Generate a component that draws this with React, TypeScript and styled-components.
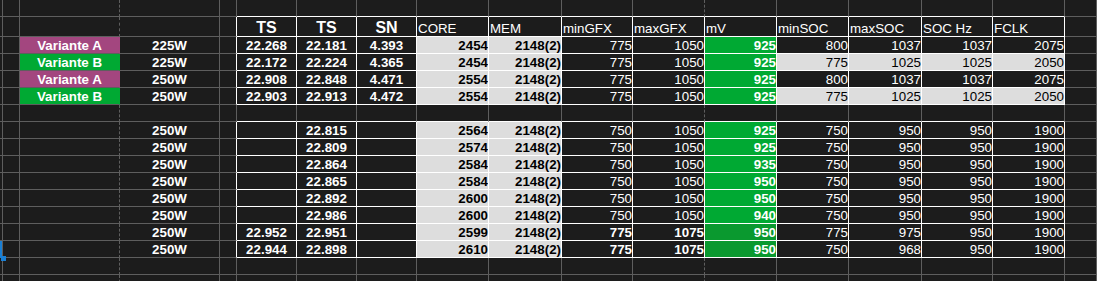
import React from 'react';
import styled, { createGlobalStyle } from 'styled-components';

const GlobalStyle = createGlobalStyle`
	html, body {
		margin: 0;
		padding: 0;
		background: #1c1c1c;
		overflow: hidden;
	}
`;

const GRID = '#5e5e5e';
const WHITE = '#ffffff';
const LIGHT = '#dddddd';
const PURPLE = '#a3467f';
const GREEN = '#00a933';
const DEEP_GREEN = '#0a992f';

const COLS = [3, 17, 100, 100, 17, 60, 60, 60, 72, 73, 71, 72, 72, 72, 73, 71, 72, 32];
const ROWS = [17, 20, 17, 17, 17, 17, 17, 17, 17, 17, 17, 17, 17, 17, 17, 17, 17];

type Align = 'l' | 'c' | 'r';

interface Spec {
	t?: string;
	bg?: string;
	fg?: string;
	b?: boolean;
	big?: boolean;
	a?: Align;
}

const Wrap = styled.div`
	position: relative;
	width: 1097px;
	height: 281px;
	overflow: hidden;
	background: #1c1c1c;
`;

const Sheet = styled.div`
	display: grid;
	grid-template-columns: ${COLS.map((c) => `${c}px`).join(' ')};
	grid-template-rows: ${ROWS.map((r) => `${r}px`).join(' ')};
	font-family: 'Liberation Sans', Arial, sans-serif;
`;

const Cell = styled.div<{
	$bg: string;
	$fg: string;
	$bold: boolean;
	$big: boolean;
	$align: Align;
	$right: string;
	$bottom: string;
	$dash: boolean;
}>`
	box-sizing: border-box;
	display: flex;
	align-items: flex-end;
	justify-content: ${(p) => (p.$align === 'l' ? 'flex-start' : p.$align === 'c' ? 'center' : 'flex-end')};
	padding-left: ${(p) => (p.$align === 'l' ? '1px' : '0')};
	background: ${(p) => p.$bg};
	color: ${(p) => p.$fg};
	border-right: 1px ${(p) => (p.$dash ? 'dashed' : 'solid')} ${(p) => p.$right};
	border-bottom: 1px solid ${(p) => p.$bottom};
	font-size: ${(p) => (p.$big ? '16px' : '13.33px')};
	line-height: ${(p) => (p.$big ? '17px' : '14px')};
	font-weight: ${(p) => (p.$bold ? 700 : 400)};
	white-space: nowrap;
	overflow: hidden;
`;

const CursorBar = styled.div`
	position: absolute;
	left: 0;
	top: 241px;
	width: 2px;
	height: 17px;
	background: #1a7fd4;
`;

const CursorHandle = styled.div`
	position: absolute;
	left: 1px;
	top: 256px;
	width: 5px;
	height: 5px;
	background: #1a7fd4;
`;

const empty = (n: number): Spec[] => Array.from({ length: n }, () => ({}));

const head = (t: string): Spec => ({ t, b: true, big: true, a: 'c' });
const label = (t: string): Spec => ({ t, a: 'l' });

interface RowData {
	variant?: [string, string];
	w: string;
	ts1?: string;
	ts2: string;
	sn?: string;
	core: string;
	gfx: [string, string];
	gfxBold?: boolean;
	mv: string;
	mvBg?: string;
	soc: [string, string, string, string];
	socLight?: boolean;
}

const dataRow = (d: RowData): Spec[] => [
	{},
	{},
	d.variant ? { t: d.variant[0], bg: d.variant[1], b: true, a: 'c' } : {},
	{ t: d.w, b: true, a: 'c' },
	{},
	{ t: d.ts1, b: true, a: 'c' },
	{ t: d.ts2, b: true, a: 'c' },
	{ t: d.sn, b: true, a: 'c' },
	{ t: d.core, bg: LIGHT, fg: '#000', b: true },
	{ t: '2148(2)', bg: LIGHT, fg: '#000', b: true },
	{ t: d.gfx[0], b: d.gfxBold },
	{ t: d.gfx[1], b: d.gfxBold },
	{ t: d.mv, bg: d.mvBg ?? GREEN, b: true },
	...d.soc.map((t) => (d.socLight ? { t, bg: LIGHT, fg: '#000' } : { t })),
	{},
];

const A: [string, string] = ['Variante A', PURPLE];
const B: [string, string] = ['Variante B', GREEN];
const SOC_A: [string, string, string, string] = ['800', '1037', '1037', '2075'];
const SOC_B: [string, string, string, string] = ['775', '1025', '1025', '2050'];
const SOC_LOW: [string, string, string, string] = ['750', '950', '950', '1900'];

const second = (core: string, mv: string, ts2: string, extra?: Partial<RowData>): Spec[] =>
	dataRow({ w: '250W', ts2, core, gfx: ['750', '1050'], mv, soc: SOC_LOW, ...extra });

const sheet: Spec[][] = [
	empty(18),
	[
		...empty(5),
		head('TS'),
		head('TS'),
		head('SN'),
		label('CORE'),
		label('MEM'),
		label('minGFX'),
		label('maxGFX'),
		label('mV'),
		label('minSOC'),
		label('maxSOC'),
		label('SOC Hz'),
		label('FCLK'),
		{},
	],
	dataRow({ variant: A, w: '225W', ts1: '22.268', ts2: '22.181', sn: '4.393', core: '2454', gfx: ['775', '1050'], mv: '925', soc: SOC_A }),
	dataRow({ variant: B, w: '225W', ts1: '22.172', ts2: '22.224', sn: '4.365', core: '2454', gfx: ['775', '1050'], mv: '925', soc: SOC_B, socLight: true }),
	dataRow({ variant: A, w: '250W', ts1: '22.908', ts2: '22.848', sn: '4.471', core: '2554', gfx: ['775', '1050'], mv: '925', soc: SOC_A }),
	dataRow({ variant: B, w: '250W', ts1: '22.903', ts2: '22.913', sn: '4.472', core: '2554', gfx: ['775', '1050'], mv: '925', soc: SOC_B, socLight: true }),
	empty(18),
	second('2564', '925', '22.815'),
	second('2574', '925', '22.809'),
	second('2584', '935', '22.864'),
	second('2584', '950', '22.865'),
	second('2600', '950', '22.892'),
	second('2600', '940', '22.986'),
	second('2599', '950', '22.951', {
		ts1: '22.952',
		gfx: ['775', '1075'],
		gfxBold: true,
		mvBg: DEEP_GREEN,
		soc: ['775', '975', '950', '1900'],
	}),
	second('2610', '950', '22.898', {
		ts1: '22.944',
		gfx: ['775', '1075'],
		gfxBold: true,
		mvBg: DEEP_GREEN,
		soc: ['750', '968', '950', '1900'],
	}),
	empty(18),
	empty(18),
];

// rows that carry the white table borders
const tableRow = (r: number) => (r >= 1 && r <= 5) || (r >= 7 && r <= 14);

const App = () => {
	return (
		<Wrap>
			<GlobalStyle />
			<Sheet>
				{sheet.map((row, r) =>
					row.map((s, c) => {
						const inTable = tableRow(r) && c >= 4 && c <= 16;
						const filledLeft = c === 2 && !!s.bg;
						const right = filledLeft ? s.bg! : inTable ? WHITE : GRID;
						const bottom = c >= 5 && c <= 16 && r <= 14 ? WHITE : GRID;
						const dash = (c === 2 && !filledLeft) || (c === 11 && !tableRow(r));
						return (
							<Cell
								key={`${r}-${c}`}
								$bg={s.bg ?? 'transparent'}
								$fg={s.fg ?? '#fff'}
								$bold={!!s.b}
								$big={!!s.big}
								$align={s.a ?? 'r'}
								$right={right}
								$bottom={bottom}
								$dash={dash}
							>
								{s.t}
							</Cell>
						);
					})
				)}
			</Sheet>
			<CursorBar />
			<CursorHandle />
		</Wrap>
	);
};

export default App;
